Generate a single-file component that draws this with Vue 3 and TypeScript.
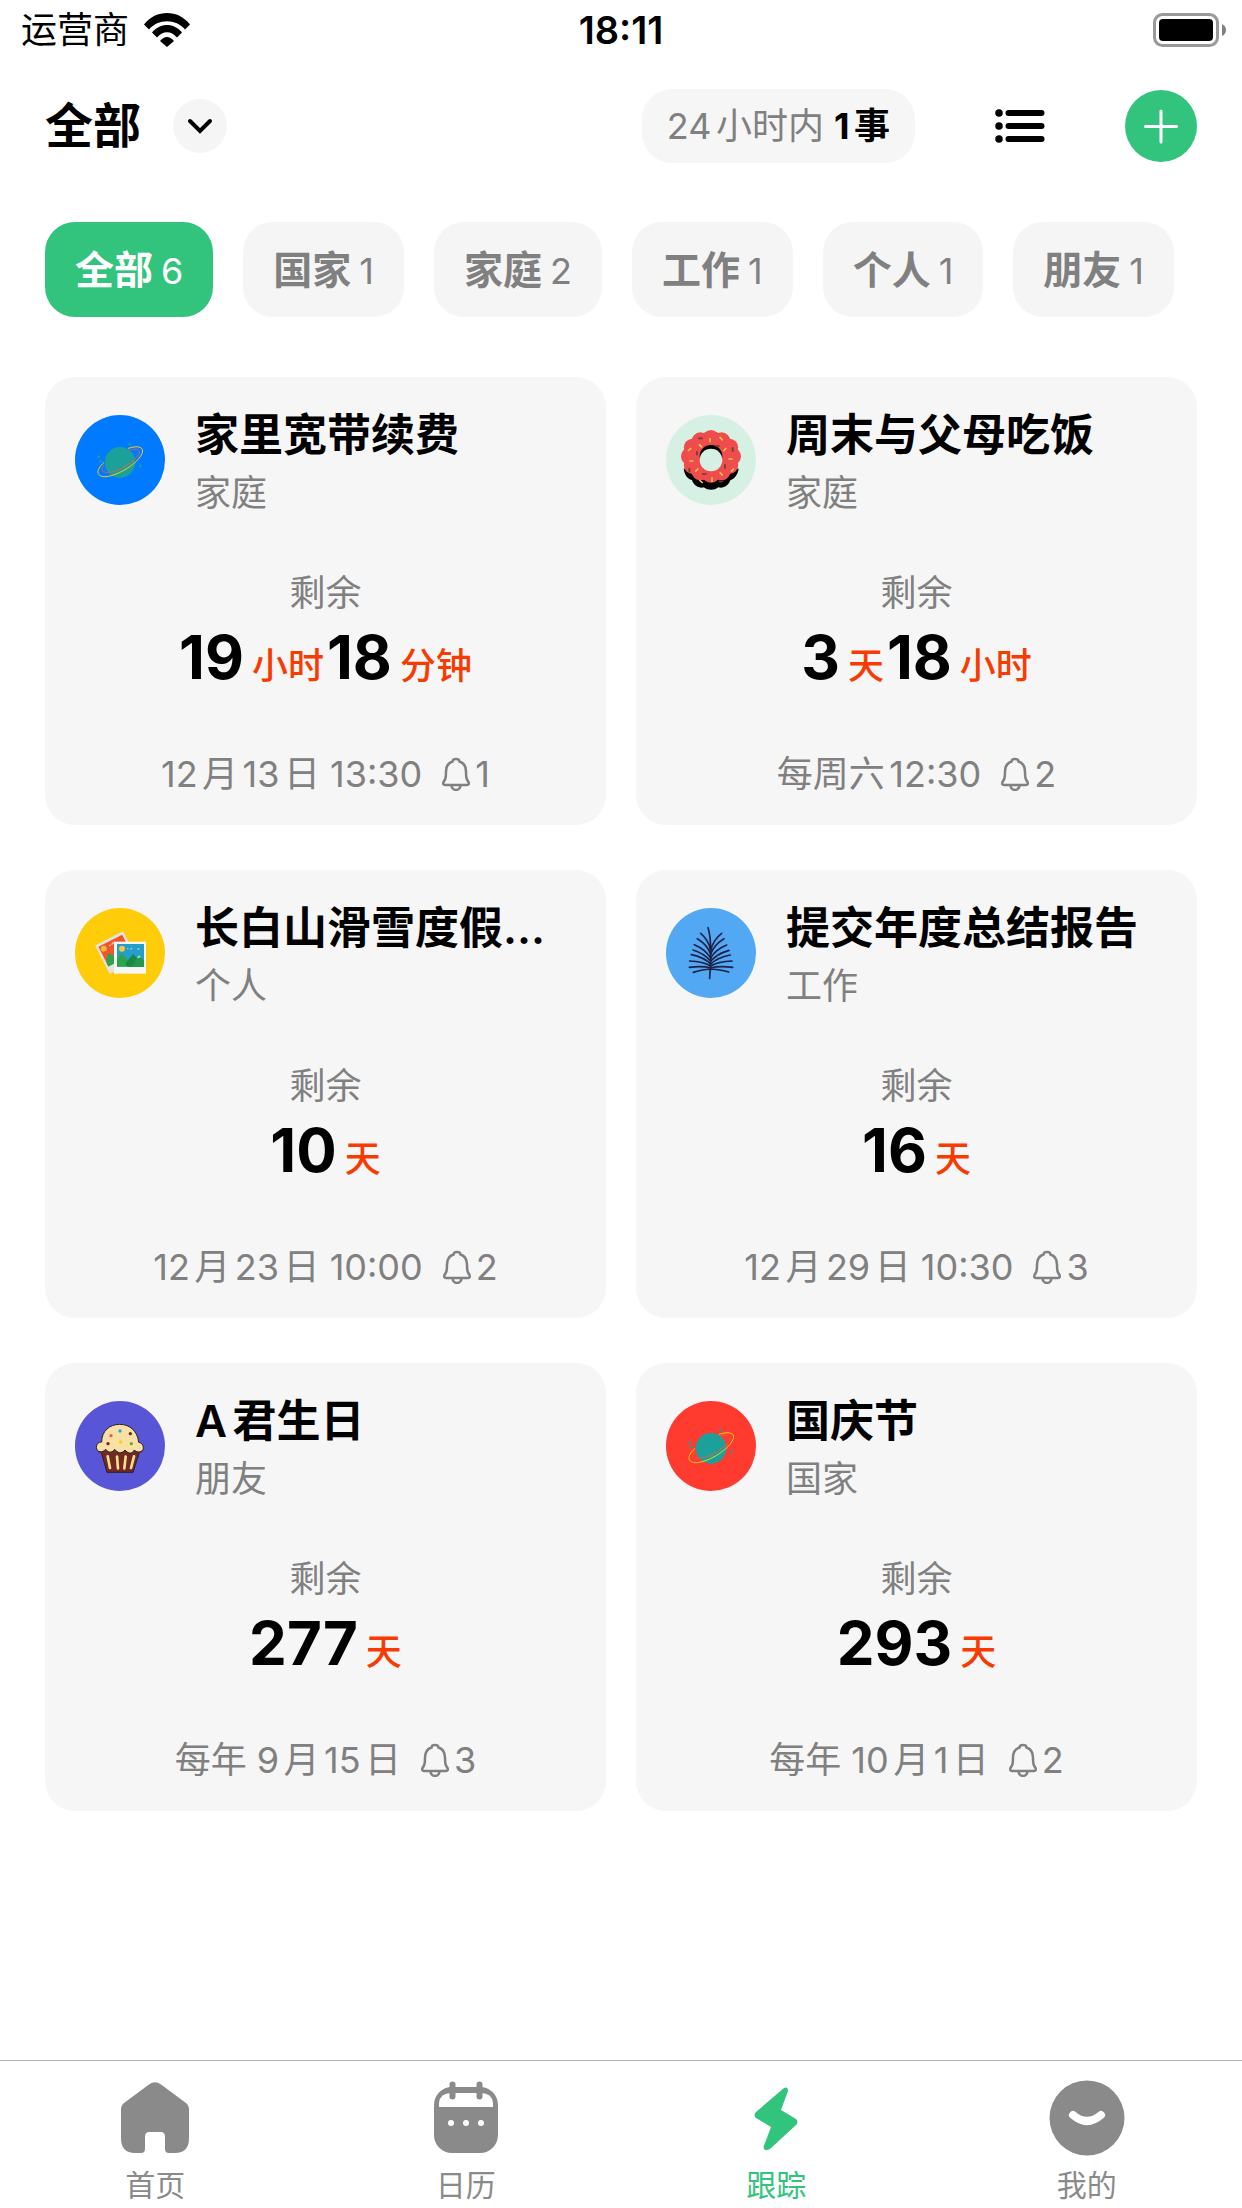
<script setup lang="ts">
import { ref } from 'vue'

interface Category {
  name: string
  count: number
}

interface Part {
  value: number
  unit: string
}

interface TrackedEvent {
  title: string
  category: string
  icon: 'planet' | 'donut' | 'photos' | 'leaf' | 'cupcake'
  color: string
  parts: Part[]
  date: string
  reminders: number
}

const categories: Category[] = [
  { name: '全部', count: 6 },
  { name: '国家', count: 1 },
  { name: '家庭', count: 2 },
  { name: '工作', count: 1 },
  { name: '个人', count: 1 },
  { name: '朋友', count: 1 },
]
const active = ref('全部')

const events: TrackedEvent[] = [
  { title: '家里宽带续费', category: '家庭', icon: 'planet', color: '#007aff', parts: [{ value: 19, unit: '小时' }, { value: 18, unit: '分钟' }], date: '12月13日 13:30', reminders: 1 },
  { title: '周末与父母吃饭', category: '家庭', icon: 'donut', color: '#d6f1e3', parts: [{ value: 3, unit: '天' }, { value: 18, unit: '小时' }], date: '每周六12:30', reminders: 2 },
  { title: '长白山滑雪度假...', category: '个人', icon: 'photos', color: '#ffcc0a', parts: [{ value: 10, unit: '天' }], date: '12月23日 10:00', reminders: 2 },
  { title: '提交年度总结报告', category: '工作', icon: 'leaf', color: '#52a8f2', parts: [{ value: 16, unit: '天' }], date: '12月29日 10:30', reminders: 3 },
  { title: 'A君生日', category: '朋友', icon: 'cupcake', color: '#5856d6', parts: [{ value: 277, unit: '天' }], date: '每年 9月15日', reminders: 3 },
  { title: '国庆节', category: '国家', icon: 'planet', color: '#ff3b30', parts: [{ value: 293, unit: '天' }], date: '每年 10月1日', reminders: 2 },
]

// Bumps around the rim of the donut
const bumps = Array.from({ length: 12 }, (_, i) => {
  const a = (i * Math.PI) / 6
  return { x: 183 + 64 * Math.sin(a), y: 169 - 53 * Math.cos(a) }
})

const yellowSprinkles = 'M180 114v13M209 111l9 10M147 133l9 9M123 144l-9 9M229 144l-9 9M118 183h12M235 177h13M145 206l-9 9M252 206l-9 9M209 217l9 9M186 232v14M148 240l10 9'
const brownSprinkles = 'M145 115h13M196 138h13M141 154v12M248 142v13M118 204v13M225 193v13M156 222h14M206 244h14'

const leaves = [
  [152, 130, 181], [142, 146, 192], [133, 164, 204], [129, 180, 214], [124, 194, 222], [119, 213, 228], [118, 232, 234], [130, 247, 238],
  [215, 130, 181], [222, 146, 192], [230, 165, 204], [237, 181, 214], [241, 195, 222], [246, 213, 228], [248, 232, 234], [236, 246, 238],
].map(([x, y, s]) => `M${x} ${y}Q${(x + 182) / 2 + (x < 182 ? 9 : -9)} ${(y + s) / 2 - 6} 182 ${s}`)
</script>

<template>
  <div class="screen">
    <div class="status">
      <div class="carrier">
        <span>运营商</span>
        <svg class="wifi" viewBox="0 0 46 34" aria-hidden="true">
          <path d="M0 11.500C12-3.800 34-3.800 46 11.500L41 16.500C32 5.500 14 5.500 5 16.500Z" />
          <path d="M8 19.500C16 9.500 30 9.500 38 19.500L33 24.500C27 17.500 19 17.500 13 24.500Z" />
          <path d="M16 28Q23 20 30 28L23 34Z" />
        </svg>
      </div>
      <time class="clock">18:11</time>
      <svg class="battery" viewBox="0 0 74 34" aria-hidden="true">
        <rect x="1.500" y="1.500" width="63" height="31" rx="8" fill="none" stroke="#999" stroke-width="3" />
        <rect x="6" y="6" width="54" height="22" rx="4" />
        <path d="M69 11q4 2 4 6t-4 6z" fill="#808080" />
      </svg>
    </div>

    <header class="head">
      <h1>全部</h1>
      <button class="expand" aria-label="切换分类">
        <svg viewBox="0 0 54 54"><path d="M17 22l10 10 10-10" fill="none" stroke="#000" stroke-width="4" stroke-linecap="round" /></svg>
      </button>
      <button class="soon"><span>24小时内</span><b>1事</b></button>
      <button class="list" aria-label="列表">
        <svg viewBox="0 0 50 34">
          <g stroke="#000" stroke-linecap="round">
            <path d="M13.500 4H46.500M13.500 17H46.500M13.500 30H46.500" stroke-width="6" />
            <path d="M4 4h0M4 17h0M4 30h0" stroke-width="7.500" />
          </g>
        </svg>
      </button>
      <button class="add" aria-label="添加">
        <svg viewBox="0 0 72 72"><path d="M36 21v31M20.500 36.500h31" stroke="#fff" stroke-width="3" stroke-linecap="round" /></svg>
      </button>
    </header>

    <div class="tabs">
      <button v-for="c in categories" :key="c.name" :class="{ active: c.name === active }" @click="active = c.name">
        <b>{{ c.name }}</b><span>{{ c.count }}</span>
      </button>
    </div>

    <main class="cards">
      <article v-for="e in events" :key="e.title" class="card">
        <div class="top">
          <div class="badge" :style="{ background: e.color }">
            <svg v-if="e.icon === 'planet'" viewBox="45 45 270 270" aria-hidden="true">
              <circle cx="180" cy="187" r="46" fill="#1ca19a" />
              <g fill="none" stroke-linecap="round">
                <path d="M208 151C226 144 242 147 237 160C228 183 181 213 148 217C125 219 120 209 131 196" stroke="#f15a3c" stroke-width="2.500" />
                <path d="M205 145C233 135 254 141 246 160C236 188 178 226 138 230C108 231 106 211 131 188" stroke="#f5cf16" stroke-width="3" />
              </g>
              <path d="M209 128v10M204 133h10M116 165v11M111 170h11M121 179v9M117 184h9M241 192v11M236 198h10" stroke="#1ca19a" stroke-width="3" />
            </svg>
            <svg v-else-if="e.icon === 'donut'" viewBox="48 45 270 270" aria-hidden="true">
              <path d="M101 206C104 228 116 238 126 240C130 256 148 266 161 262C174 272 193 272 205 262C220 266 236 257 241 241C255 235 264 222 266 206Z" />
              <g fill="#f04c4e">
                <ellipse cx="183" cy="169" rx="83" ry="73" />
                <circle v-for="(b, i) in bumps" :key="i" :cx="b.x" :cy="b.y" r="26" />
              </g>
              <circle cx="183" cy="169" r="34" />
              <circle cx="183" cy="180" r="34" fill="#d6f1e3" />
              <path :d="yellowSprinkles" stroke="#f6c944" stroke-width="5" />
              <path :d="brownSprinkles" stroke="#64402c" stroke-width="5" />
            </svg>
            <svg v-else-if="e.icon === 'photos'" viewBox="45 54 270 270" aria-hidden="true">
              <g transform="translate(23 0) rotate(-27 146 188)">
                <rect x="99" y="140" width="94" height="96" fill="#e3e3df" />
                <rect x="106" y="148" width="80" height="66" fill="#f1552b" />
                <path d="M106 214v-13l16-24 18 22 16-14 14 29z" fill="#2da350" />
                <circle cx="118" cy="160" r="9" fill="#f6b83c" />
                <path d="M136 160h5M144 160l10-4" stroke="#f4c6b9" stroke-width="4" />
              </g>
              <rect x="162" y="155" width="96" height="96" fill="#f5f6f5" />
              <rect x="171" y="162" width="81" height="68" fill="#279dca" />
              <path d="M171 230v-24l15-17 31 41z" fill="#2ca44c" />
              <path d="M196 220l24-28 32 38h-50z" fill="#168a45" />
              <path d="M213 230l24-34 15 16v18z" fill="#27964c" />
              <path d="M231 203l6-8 8 8-5-1-4 3z" fill="#9bd4d8" />
              <circle cx="186" cy="176" r="9" fill="#f4c746" />
              <path d="M201 176h4M210 178l7-3M231 177h8" stroke="#a5ddea" stroke-width="3" />
            </svg>
            <svg v-else-if="e.icon === 'leaf'" viewBox="48 54 270 270" aria-hidden="true">
              <g fill="none" stroke="#1d2148" stroke-width="5" stroke-linecap="round">
                <path d="M174 113C184 140 182 170 182 210L179 265" />
                <path v-for="d in leaves" :key="d" :d="d" />
              </g>
            </svg>
            <svg v-else viewBox="45 48 270 270" aria-hidden="true">
              <path d="M122 196L141 262H219L240 196Z" fill="#722a20" stroke="#202033" stroke-width="3" stroke-linejoin="round" />
              <path d="M143 214l7 35M171 215l3 35M197 215l-4 35M222 214l-9 35" stroke="#f6dd91" stroke-width="8" stroke-linecap="round" />
              <path d="M110 190C111 209 133 208 139 201C146 215 160 211 166 203C175 214 190 213 197 204C206 215 221 211 225 203C240 209 251 202 251 190Z" fill="#722a20" />
              <path d="M125 171C125 138 149 118 179 118C210 118 233 139 236 172C248 174 252 184 249 194C243 204 228 202 223 195C214 211 202 203 195 195C184 208 173 204 164 193C154 207 143 201 137 193C127 205 111 202 109 188C109 177 115 171 125 171Z" fill="#f9e0a5" stroke="#202033" stroke-width="3" />
              <circle cx="180" cy="138" r="5" fill="#25a8df" />
              <circle cx="153" cy="152" r="5" fill="#f05a4f" />
              <circle cx="211" cy="146" r="5" fill="#722a20" />
              <circle cx="144" cy="176" r="5" fill="#722a20" />
              <circle cx="182" cy="171" r="5" fill="#f5d315" />
              <circle cx="214" cy="176" r="5" fill="#55b52f" />
            </svg>
          </div>
          <div class="names">
            <h2>{{ e.title }}</h2>
            <p>{{ e.category }}</p>
          </div>
        </div>
        <p class="label">剩余</p>
        <p class="left">
          <template v-for="p in e.parts" :key="p.unit"><strong>{{ p.value }}</strong><span>{{ p.unit }}</span></template>
        </p>
        <p class="when">
          <time>{{ e.date }}</time>
          <svg viewBox="0 0 28 34" aria-hidden="true">
            <path d="M10.500 4.500C10.500 1 17.500 1 17.500 4.500C22 6 24 10 24 14.500C24 21 24.500 22 26.500 25Q27.500 28 25 28H3Q.500 28 1.500 25C3.500 22 4 21 4 14.500C4 10 6 6 10.500 4.500ZM9.500 28C9.500 34.500 18.500 34.500 18.500 28" fill="none" stroke="#808080" stroke-width="2.500" />
          </svg>
          <span>{{ e.reminders }}</span>
        </p>
      </article>
    </main>

    <nav class="nav">
      <a href="#home">
        <svg viewBox="0 0 76 76" aria-hidden="true">
          <path d="M32 4.500Q38 0 44 4.500L69 23Q72 25.500 72 29.500V58Q72 73 58 73H52Q48 73 48 69V57Q48 52 44 52H32Q28 52 28 57V69Q28 73 24 73H18Q4 73 4 58V29.500Q4 25.500 7 23Z" />
        </svg>
        <span>首页</span>
      </a>
      <a href="#calendar">
        <svg viewBox="0 0 76 76" aria-hidden="true">
          <rect x="6" y="7" width="64" height="66" rx="18" />
          <path d="M11 27V23Q12 13 23 13H53Q64 13 65 23V27Z" fill="#fff" />
          <path d="M24.500 4.500v12M51.500 4.500v12" stroke="currentColor" stroke-width="6" stroke-linecap="round" />
          <circle cx="23" cy="43" r="3" fill="#fff" /><circle cx="38" cy="43" r="3" fill="#fff" /><circle cx="53" cy="43" r="3" fill="#fff" />
        </svg>
        <span>日历</span>
      </a>
      <a href="#track" class="current">
        <svg viewBox="0 0 76 76" aria-hidden="true">
          <path d="M46 8Q50 6 50 11L43 30L58 39Q61 42 58 45L32 69Q26 72 25.500 67L33 47L18 38Q15 35 18 32Z" />
        </svg>
        <span>跟踪</span>
      </a>
      <a href="#me">
        <svg viewBox="0 0 76 76" aria-hidden="true">
          <circle cx="38" cy="38" r="37.500" />
          <path d="M24 35Q38 47 52 35" fill="none" stroke="#fff" stroke-width="8" stroke-linecap="round" />
        </svg>
        <span>我的</span>
      </a>
    </nav>
  </div>
</template>

<style>
body {
  margin: 0;
  background: #fff;
}
</style>

<style scoped>
.screen {
  min-height: 100vh;
  display: flex;
  flex-direction: column;
  font-family: Inter, "Noto Sans CJK SC", sans-serif;
  font-size: 36px;
  line-height: 48px;
  text-autospace: normal;
  color: #000;
}
h1, h2, p {
  margin: 0;
}
button {
  border: 0;
  padding: 0;
  font: inherit;
  color: inherit;
  cursor: pointer;
}
svg {
  display: block;
}
.status {
  display: grid;
  grid-template-columns: 1fr auto 1fr;
  align-items: center;
  height: 60px;
  padding: 0 15px;
}
.carrier {
  display: flex;
  align-items: center;
  gap: 15px;
  margin-left: 6px;
}
.wifi {
  width: 46px;
  height: 34px;
}
.clock {
  font-size: 38px;
  font-weight: 600;
}
.battery {
  width: 74px;
  height: 34px;
  justify-self: end;
}
.head {
  display: flex;
  align-items: center;
  height: 132px;
  padding: 0 45px;
}
h1 {
  font-size: 48px;
  line-height: 60px;
  font-weight: 700;
}
.expand {
  width: 54px;
  height: 54px;
  margin-left: 32px;
  border-radius: 50%;
  background: #f5f5f5;
}
.soon {
  display: flex;
  align-items: center;
  gap: 10px;
  height: 74px;
  margin-left: auto;
  padding: 0 25px;
  border-radius: 30px;
  background: #f6f6f6;
}
.soon span {
  color: #808080;
}
.list {
  width: 50px;
  margin-left: 80px;
  background: none;
}
.add {
  width: 72px;
  height: 72px;
  margin-left: 80px;
  border-radius: 50%;
  background: #32c47c;
}
.tabs {
  display: flex;
  gap: 30px;
  padding: 30px 45px 0;
}
.tabs button {
  display: flex;
  align-items: baseline;
  gap: 8px;
  height: 95px;
  padding: 0 30px;
  border-radius: 30px;
  background: #f5f5f5;
  line-height: 95px;
  color: #808080;
}
.tabs b {
  font-size: 39px;
  font-weight: 600;
}
.tabs .active {
  background: #32c47c;
  color: #fff;
}
.cards {
  display: grid;
  grid-template-columns: 1fr 1fr;
  gap: 45px 30px;
  padding: 60px 45px;
}
.card {
  min-width: 0;
  box-sizing: border-box;
  padding: 30px 30px 27px;
  border-radius: 30px;
  background: #f6f6f6;
}
.top {
  display: flex;
  align-items: flex-start;
  gap: 30px;
}
.badge {
  flex: none;
  width: 90px;
  height: 90px;
  margin-top: 8px;
  border-radius: 50%;
}
.names {
  display: grid;
  gap: 6px;
}
h2 {
  white-space: nowrap;
  font-size: 44px;
  line-height: 56px;
  font-weight: 600;
}
.names p,
.label {
  color: #808080;
}
.label {
  margin-top: 52px;
  text-align: center;
}
.left {
  display: flex;
  justify-content: center;
  align-items: baseline;
  line-height: 80px;
}
.left strong {
  font-size: 60px;
}
.left span {
  margin-left: 8px;
  color: #f63c02;
  font-weight: 500;
}
.left span + strong {
  margin-left: 3px;
}
.when {
  display: flex;
  justify-content: center;
  align-items: center;
  margin-top: 44px;
  color: #808080;
}
.when svg {
  width: 28px;
  height: 34px;
  margin: 0 5px 0 20px;
}
.nav {
  display: grid;
  grid-template-columns: repeat(4, 1fr);
  height: 147px;
  margin-top: auto;
  border-top: 1px solid #b2b2b2;
}
.nav a {
  display: flex;
  flex-direction: column;
  align-items: center;
  padding-top: 19px;
  font-size: 30px;
  line-height: 58px;
  color: #8a8a8a;
  text-decoration: none;
}
.nav svg {
  width: 76px;
  height: 76px;
  fill: currentColor;
}
.nav .current {
  color: #32c47c;
}
</style>
